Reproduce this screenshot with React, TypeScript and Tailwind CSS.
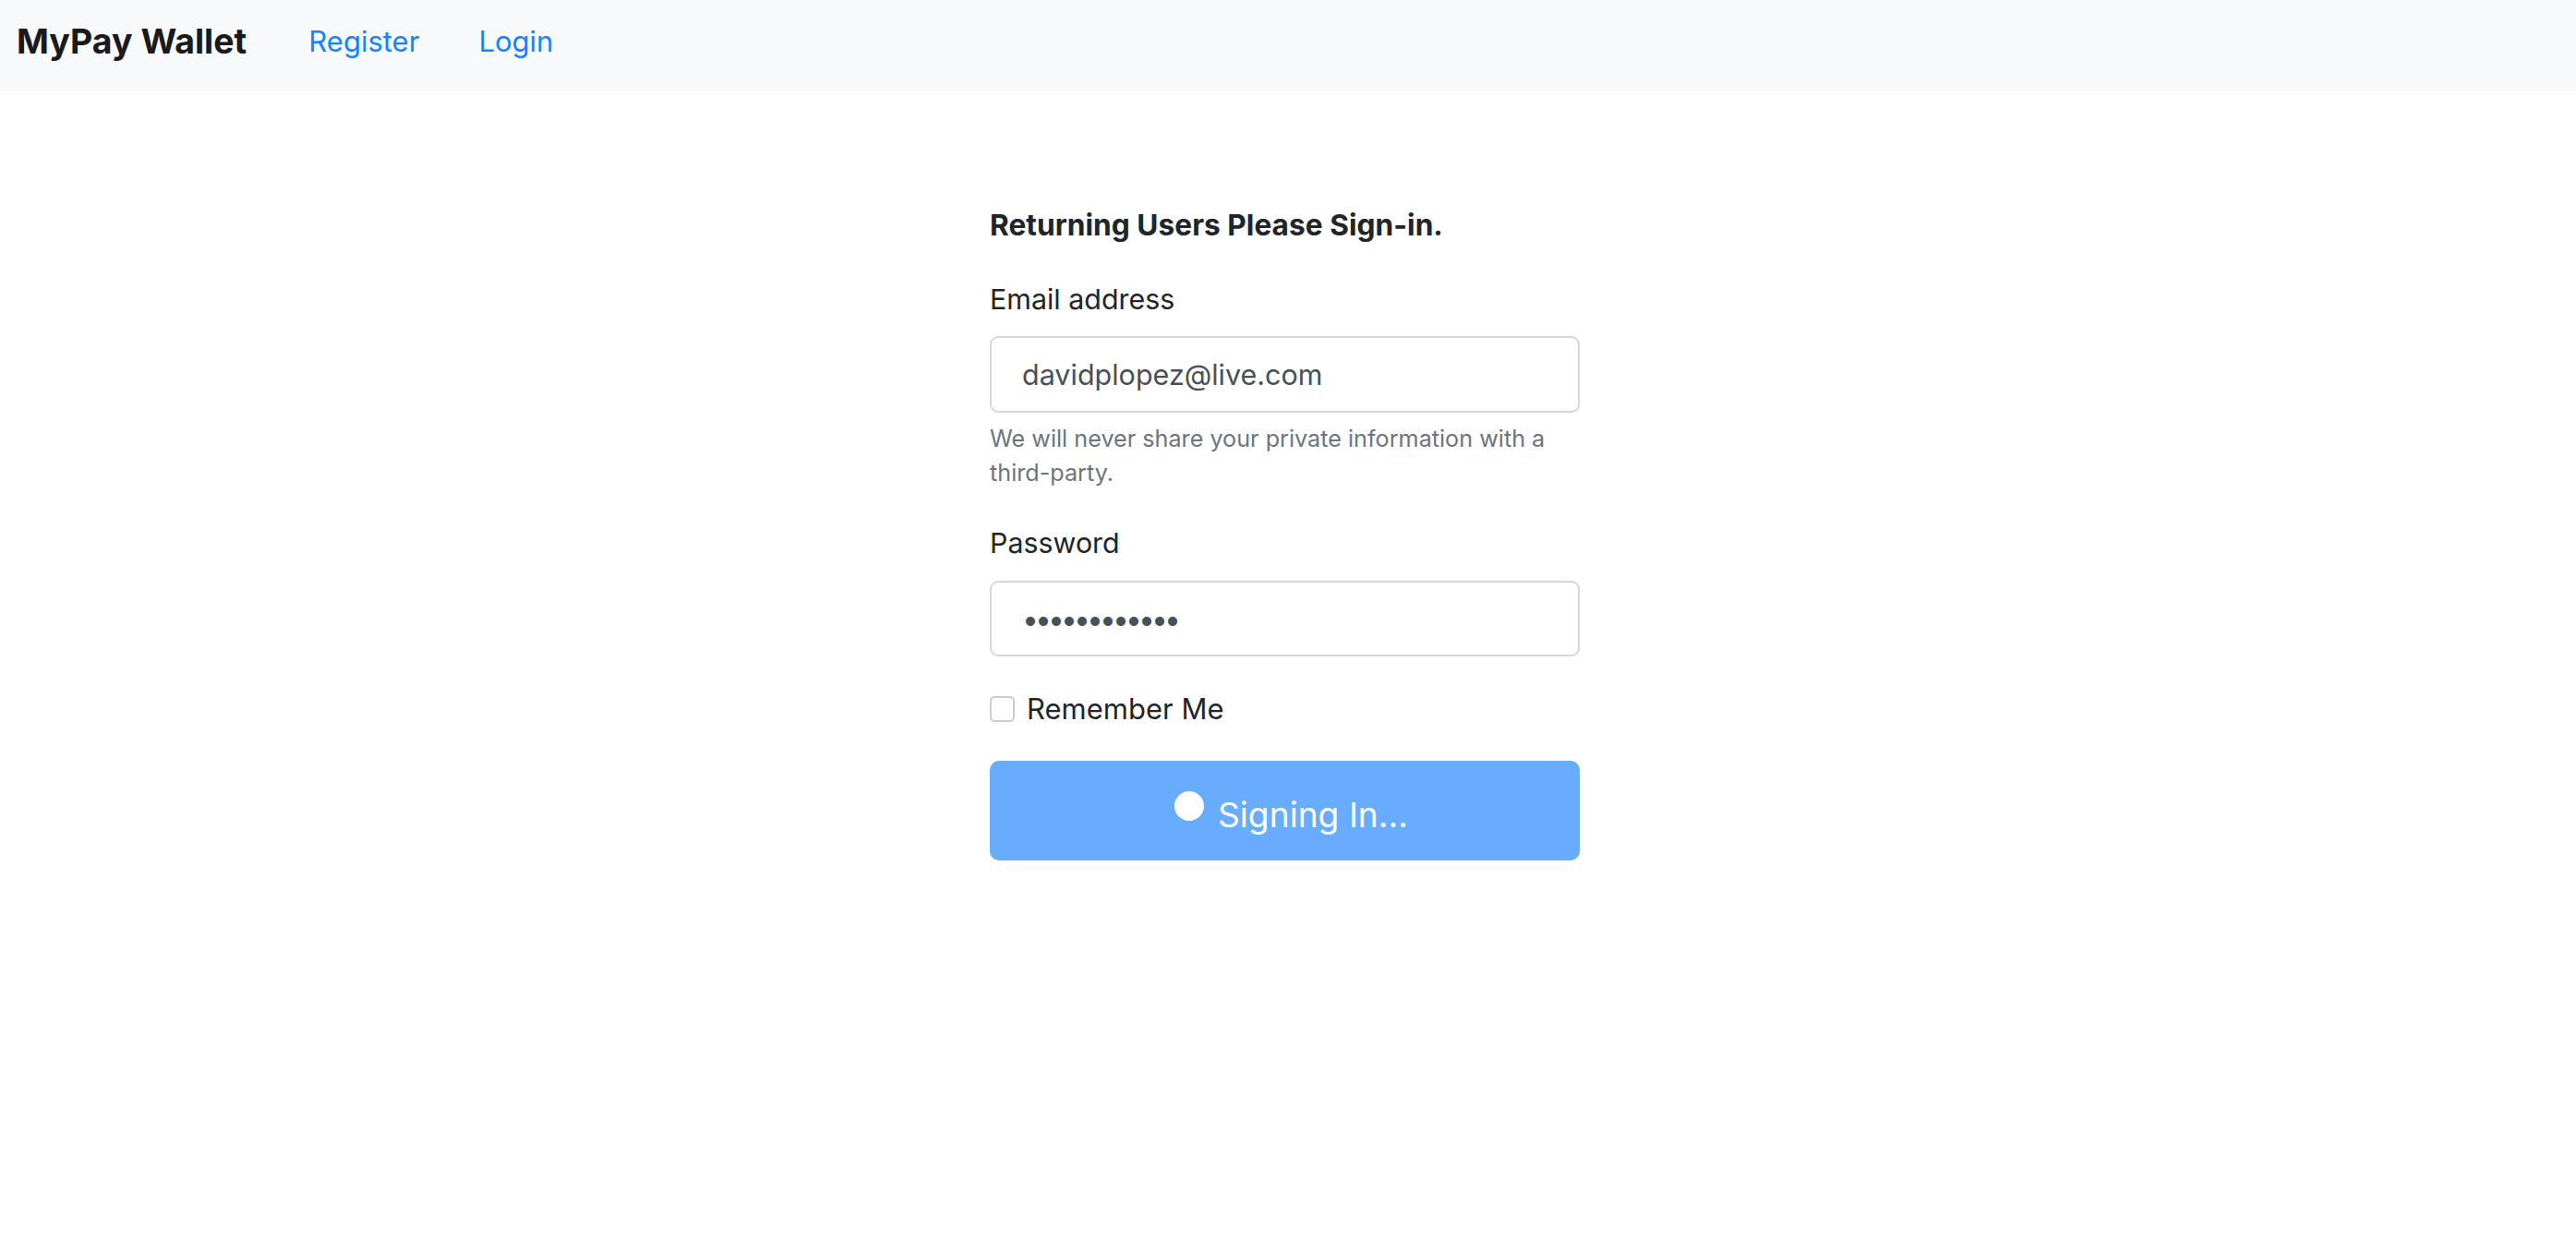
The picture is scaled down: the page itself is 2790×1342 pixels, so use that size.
export default function App() {
  return (
    <div className="min-h-screen bg-white font-['Inter','Liberation_Sans',sans-serif] text-[#212529]">
      <nav className="flex h-[99px] items-center bg-[#f8f9fa] px-[18px] pb-[10px]">
        <a className="text-[37.5px] font-bold leading-none text-[#1a1a1a]" href="#">
          MyPay Wallet
        </a>
        <a className="ml-[67px] text-[31px] leading-none text-[#1783fb]" href="#">
          Register
        </a>
        <a className="ml-[64px] text-[31px] leading-none text-[#1783fb]" href="#">
          Login
        </a>
      </nav>

      <main className="flex justify-center pr-[7px]">
        <form className="flex w-[639px] flex-col">
          <h5 className="mt-[125px] text-[31.7px] font-bold leading-[40px]">
            Returning Users Please Sign-in.
          </h5>

          <label className="mt-[40px] text-[30.4px] leading-[40px]">Email address</label>
          <input
            type="email"
            readOnly
            value="davidplopez@live.com"
            className="mt-[20px] h-[83px] w-full rounded-[9px] border-2 border-[#d4d8dd] pl-[33px] text-[30.5px] text-[#495057] outline-none"
          />
          <small className="mt-[10px] text-[25.2px] leading-[37px] text-[#6c757d]">
            We will never share your private information with a third-party.
          </small>

          <label className="mt-[37px] text-[30.4px] leading-[40px]">Password</label>
          <input
            type="password"
            readOnly
            value="password1234"
            className="mt-[21px] h-[82px] w-full rounded-[9px] border-2 border-[#d4d8dd] pl-[33px] text-[32px] tracking-[-4px] text-[#495057] outline-none"
          />

          <label className="mt-[37px] flex h-[40px] items-center">
            <input
              type="checkbox"
              className="h-[28px] w-[27px] appearance-none rounded-[5px] border-2 border-[#c9cdd2] bg-white"
            />
            <span className="ml-[13px] text-[31px] leading-[40px]">Remember Me</span>
          </label>

          <button
            type="button"
            disabled
            className="mt-[36px] flex h-[108px] w-full items-center justify-center rounded-[10px] bg-[#67acfd] pl-[14px] text-white"
          >
            <span className="mr-[15px] h-[32px] w-[32px] -translate-y-[5px] rounded-full bg-white" />
            <span className="translate-y-[5px] text-[37.2px] leading-none">Signing In...</span>
          </button>
        </form>
      </main>
    </div>
  );
}
